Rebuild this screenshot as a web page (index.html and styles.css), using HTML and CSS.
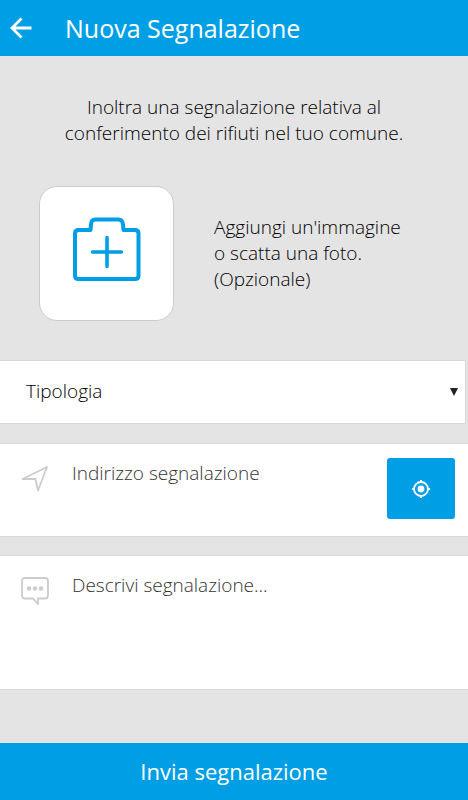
FILE: index.html
```html
<!DOCTYPE html>
<html lang="it">
<head>
<meta charset="utf-8">
<meta name="viewport" content="width=device-width, initial-scale=1">
<title>Nuova Segnalazione</title>
<link rel="stylesheet" href="styles.css">
</head>
<body>
<header class="topbar">
  <a class="back" href="#" aria-label="Indietro">
    <svg width="24" height="24" viewBox="0 0 24 24" fill="none" stroke="currentColor" stroke-width="2.8"><path d="M22.500 12H3M12.500 2.500L3 12l9.500 9.500"/></svg>
  </a>
  <h1 class="title">Nuova Segnalazione</h1>
</header>
<form class="report">
  <p class="intro">Inoltra una segnalazione relativa al conferimento dei rifiuti nel tuo comune.</p>
  <div class="photo">
    <button class="photo-button" type="button" aria-label="Aggiungi immagine" aria-describedby="photo-text">
      <svg width="70" height="66" viewBox="0 0 70 66" fill="none" stroke="currentColor" stroke-width="4" stroke-linecap="round" stroke-linejoin="round"><path d="M18.500 13H6.500Q3 13 3 16.500V58.500Q3 62 6.500 62H63Q66.500 62 66.500 58.500V16.500Q66.500 13 63 13H51.500L51 7.500Q50.500 2.500 46.500 2.500H23.500Q19 2.500 19 7.500Z"/><path d="M35 20.500v29M20.500 35h29" stroke-width="3.600"/></svg>
    </button>
    <p class="photo-text" id="photo-text">Aggiungi un'immagine<br>o scatta una foto.<br>(Opzionale)</p>
  </div>
  <div class="type">
    <select class="type-select" aria-label="Tipologia"><option>Tipologia</option></select>
    <svg class="type-arrow" width="8" height="8" viewBox="0 0 8 8"><path d="M0 0h8L4 8z" fill="#222"/></svg>
  </div>
  <div class="field">
    <label class="field-icon" for="address" aria-label="Indirizzo">
      <svg width="28" height="28" viewBox="0 0 28 28" fill="none" stroke="currentColor" stroke-width="1.800" stroke-linejoin="round"><path d="M1.500 14L26 2l-9 23.500-2.500-11.500z"/></svg>
    </label>
    <input class="field-input" id="address" type="text" placeholder="Indirizzo segnalazione">
    <button class="locate" type="button" aria-label="Usa la mia posizione">
      <svg width="20" height="20" viewBox="0 0 20 20" fill="none" stroke="currentColor" stroke-width="1.800"><circle cx="10" cy="10" r="7"/><circle cx="10" cy="10" r="3.400" fill="currentColor" stroke="none"/><path d="M10 1v2.500M10 16.500V19M1 10h2.500M16.500 10H19"/></svg>
    </button>
  </div>
  <div class="field field-large">
    <label class="field-icon" for="description" aria-label="Descrizione">
      <svg width="28" height="28" viewBox="0 0 28 28" fill="none" stroke="currentColor" stroke-width="1.800"><path d="M4 1h20q3 0 3 3v14.500q0 3-3 3H17V27l-5-5.500H4q-3 0-3-3V4q0-3 3-3z"/><g fill="currentColor" stroke="none"><circle cx="8" cy="11.500" r="2.200"/><circle cx="14" cy="11.500" r="2.200"/><circle cx="20" cy="11.500" r="2.200"/></g></svg>
    </label>
    <textarea class="field-input field-area" id="description" placeholder="Descrivi segnalazione..."></textarea>
  </div>
  <button class="submit" type="submit">Invia segnalazione</button>
</form>
</body>
</html>
```
FILE: styles.css
```css
* {
  box-sizing: border-box;
}

body {
  display: flex;
  flex-direction: column;
  min-height: 100vh;
  margin: 0;
  background: #e4e4e4;
  color: #000;
  font: 300 19px/26px "Open Sans", sans-serif;
}

button,
select,
input,
textarea {
  margin: 0;
  padding: 0;
  border: 0;
  border-radius: 0;
  font: inherit;
  color: inherit;
  background: none;
  appearance: none;
}

button {
  display: flex;
  align-items: center;
  justify-content: center;
  cursor: pointer;
}

svg {
  display: block;
}

.topbar {
  display: flex;
  align-items: center;
  gap: 32px;
  height: 56px;
  padding: 0 9px;
  background: #009fe5;
  color: #fff;
}

.back {
  color: inherit;
}

.title {
  margin: 0;
  font-size: 25px;
  font-weight: 400;
  line-height: 36px;
}

.report {
  display: flex;
  flex: 1;
  flex-direction: column;
}

.intro {
  margin: 38px 56px 40px;
  text-align: center;
}

.photo {
  display: flex;
  align-items: center;
  gap: 40px;
  margin: 0 40px 39px 39px;
}

.photo-button {
  flex: none;
  width: 135px;
  height: 135px;
  padding-bottom: 8px;
  border: 1px solid #ccc;
  border-radius: 18px;
  background: #fff;
  color: #009fe5;
}

.photo-text {
  margin: 0;
  padding-bottom: 2px;
}

.type {
  position: relative;
  margin: 0 2px 19px 0;
}

.type-select {
  display: block;
  width: 100%;
  height: 64px;
  padding: 0 26px 2px;
  border: 1px solid #d8d8d8;
  border-left: 0;
  background: #fff;
}

.type-arrow {
  position: absolute;
  top: 28px;
  right: 8px;
  pointer-events: none;
}

.field {
  display: flex;
  align-items: flex-start;
  min-height: 94px;
  margin-bottom: 18px;
  padding: 14px 13px 16px 21px;
  border: solid #d8d8d8;
  border-width: 1px 0;
  background: #fff;
}

.field-large {
  min-height: 135px;
}

.field-icon {
  flex: none;
  margin: 7px 23px 0 0;
  color: #ccc;
}

.field-input {
  flex: 1;
  min-width: 0;
  height: 30px;
}

.field-area {
  height: 103px;
  padding-top: 2px;
  resize: none;
}

.field-input::placeholder {
  color: #333;
  opacity: 1;
}

.locate {
  flex: none;
  width: 68px;
  height: 61px;
  border-radius: 3px;
  background: #009fe5;
  color: #fff;
}

.submit {
  min-height: 57px;
  margin-top: auto;
  padding-bottom: 2px;
  background: #009fe5;
  color: #fff;
  font-size: 22px;
  font-weight: 400;
}
```
